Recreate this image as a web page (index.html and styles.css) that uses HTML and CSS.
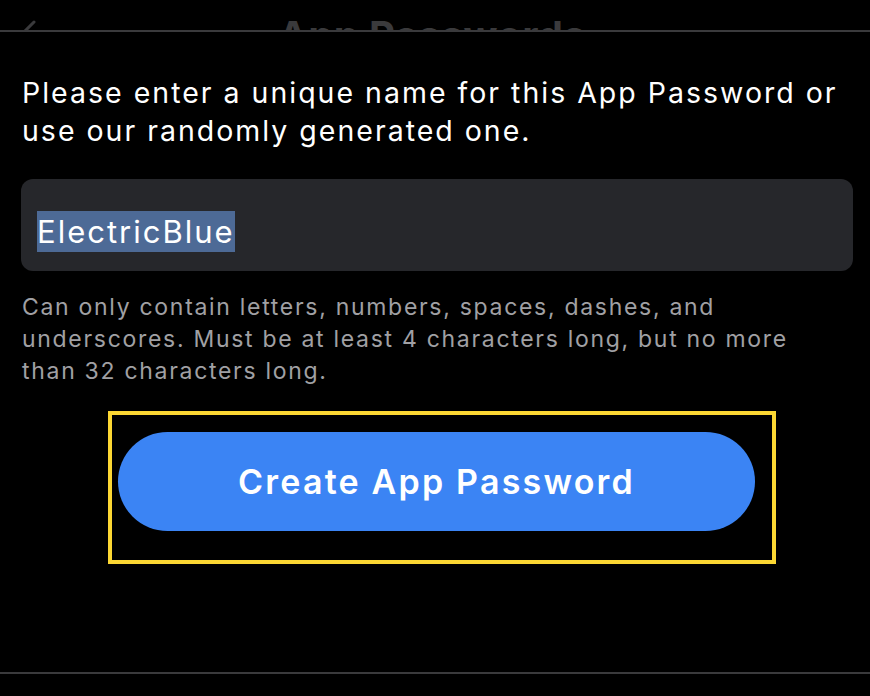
FILE: index.html
```html
<!DOCTYPE html>
<html lang="en">
<head>
<meta charset="utf-8">
<title>App Passwords</title>
<link rel="stylesheet" href="styles.css">
</head>
<body>
<div class="screen">
  <header class="nav">
    <span class="back">
      <svg width="14" height="24" viewBox="0 0 14 24"><path d="M12 2 L2 12 L12 22" fill="none" stroke="#3a3a3c" stroke-width="3" stroke-linecap="round" stroke-linejoin="round"/></svg>
    </span>
    <h1 class="nav-title">App Passwords</h1>
  </header>
  <main class="content">
    <p class="intro">Please enter a unique name for this App Password or use our randomly generated one.</p>
    <div class="field"><span class="selected">ElectricBlue</span></div>
    <p class="hint">Can only contain letters, numbers, spaces, dashes, and underscores. Must be at least 4 characters long, but no more than 32 characters long.</p>
    <div class="highlight">
      <button class="primary">Create App Password</button>
    </div>
  </main>
  <footer class="bottom"></footer>
</div>
</body>
</html>
```

FILE: styles.css
```css
html, body {
  margin: 0;
  padding: 0;
  background: #000;
}
body {
  font-family: Inter, "Noto Sans", sans-serif;
  color: #fff;
}
.screen {
  width: 870px;
  height: 696px;
  display: flex;
  flex-direction: column;
  overflow: hidden;
}
.nav {
  height: 30px;
  border-bottom: 2px solid #3a3a3c;
  overflow: hidden;
  display: flex;
  align-items: flex-start;
  flex-shrink: 0;
}
.back {
  padding: 20px 0 0 22px;
  width: 278px;
  box-sizing: border-box;
}
.nav-title {
  margin: 0;
  padding-top: 12px;
  font-size: 40px;
  font-weight: 700;
  line-height: 48px;
  letter-spacing: 0.3px;
  color: #3a3a3c;
}
.content {
  flex: 1;
  padding: 0 17px 0 21px;
}
.intro {
  margin: 42px 0 0 1px;
  font-size: 28.5px;
  line-height: 38px;
  letter-spacing: 2px;
}
.field {
  margin-top: 29px;
  height: 92px;
  box-sizing: border-box;
  padding: 12px 0 0 16px;
  border-radius: 12px;
  background: #26272b;
  display: flex;
  align-items: center;
}
.selected {
  background: #4d6a96;
  font-size: 31px;
  line-height: 41px;
  letter-spacing: 2px;
  color: #fff;
}
.hint {
  margin: 20px 0 0 1px;
  padding-right: 40px;
  font-size: 23px;
  line-height: 32px;
  color: #a0a0a4;
  letter-spacing: 1.7px;
}
.highlight {
  margin: 24px 0 0 87px;
  width: 668px;
  height: 153px;
  border: 4px solid #fcd733;
  display: flex;
  align-items: flex-start;
  padding: 17px 0 0 6px;
  box-sizing: border-box;
}
.primary {
  width: 637px;
  height: 99px;
  border: none;
  border-radius: 50px;
  background: #3b84f4;
  color: #fff;
  font-family: Inter, "Noto Sans", sans-serif;
  font-size: 34px;
  font-weight: 600;
  letter-spacing: 2.2px;
}
.bottom {
  height: 22px;
  border-top: 2px solid #3a3a3c;
  flex-shrink: 0;
}
```
